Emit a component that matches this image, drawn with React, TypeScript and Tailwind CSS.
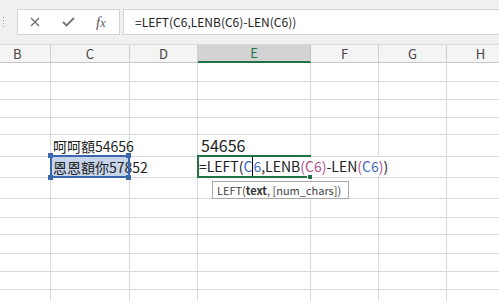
import React from "react";

const colW = ["w-[51px]", "w-[79px]", "w-[68px]", "w-[113px]", "w-[68px]", "w-[68px]", "w-[68px]"];
const headers = ["B", "C", "D", "E", "F", "G", "H"];
const rowH = [
  "h-[19px]",
  "h-[18px]",
  "h-[18px]",
  "h-[17px]",
  "h-[22px]",
  "h-[21px]",
  "h-[21px]",
  "h-[19px]",
  "h-[17px]",
  "h-[19px]",
  "h-[18px]",
  "h-[18px]",
  "h-[18px]",
];

const BLUE = "text-[#3e6bc2]";
const MAUVE = "text-[#b4508c]";

function CellContent({ r, c }: { r: number; c: number }) {
  if (r === 4 && c === 1) {
    return (
      <div className="absolute left-[2px] bottom-[1px] whitespace-nowrap text-[14px] leading-[18px] text-[#222]">
        呵呵額54656
      </div>
    );
  }
  if (r === 4 && c === 3) {
    return (
      <div className="absolute left-[3px] bottom-[2px] whitespace-nowrap text-[16px] leading-[18px] text-[#222]">
        54656
      </div>
    );
  }
  if (r === 5 && c === 1) {
    return (
      <>
        <div className="absolute left-[-1px] top-[-2px] w-[80px] h-[23px] bg-[#c6d5ea]" />
        <div className="absolute left-[2px] top-0 h-[20px] flex items-center whitespace-nowrap text-[14px] text-[#222] z-[1]">
          恩恩額你57852
        </div>
        <div className="absolute left-[-1px] top-[-2px] w-[80px] h-[23px] border-2 border-[#3a66ad] z-10" />
        <div className="absolute left-[-3px] top-[-4px] w-[5px] h-[5px] bg-[#3a66ad] z-10" />
        <div className="absolute left-[75px] top-[-4px] w-[5px] h-[5px] bg-[#3a66ad] z-10" />
        <div className="absolute left-[-3px] top-[18px] w-[5px] h-[5px] bg-[#3a66ad] z-10" />
        <div className="absolute left-[75px] top-[18px] w-[5px] h-[5px] bg-[#3a66ad] z-10" />
      </>
    );
  }
  if (r === 5 && c === 3) {
    return (
      <>
        <div className="absolute left-[-1px] top-[-2px] w-[114px] h-[23px] border-2 border-[#217346] z-10" />
        <div className="absolute left-[1px] top-0 h-[19px] pr-[3px] flex items-center whitespace-pre bg-white text-[14px] text-[#222] z-20">
          <span>=LEFT(</span>
          <span className={BLUE}>C</span>
          <span className="self-stretch w-px bg-black" />
          <span className={BLUE}>6</span>
          <span>,LENB</span>
          <span className={MAUVE}>(C6)</span>
          <span>-LEN</span>
          <span className={MAUVE}>(</span>
          <span className={BLUE}>C6</span>
          <span className={MAUVE}>)</span>
          <span>)</span>
        </div>
        <div className="absolute left-[109px] top-[17px] w-[6px] h-[6px] bg-[#217346] border border-white z-20" />
        <div className="absolute left-[14px] top-[24px] w-[137px] h-[18px] border border-[#a8a8a8] bg-white z-30 flex items-center pl-[4px] whitespace-pre text-[11px] text-[#444]">
          <span>LEFT(</span>
          <span className="font-bold text-[#333]">text</span>
          <span>, [num_chars])</span>
        </div>
      </>
    );
  }
  return null;
}

export default function App() {
  return (
    <div className="w-[499px] h-[301px] overflow-hidden bg-white font-['Noto_Sans_CJK_SC',sans-serif]">
      {/* Formula toolbar */}
      <div className="h-[45px] bg-[#f0f0f0] border-b border-[#d9d9d9] flex items-start pt-[9px]">
        <div className="w-[17px] h-[26px] flex flex-col items-center justify-center gap-[2px] pr-[11px]">
          <div className="w-px h-px bg-[#9a9a9a]" />
          <div className="w-px h-px bg-[#9a9a9a]" />
          <div className="w-px h-px bg-[#9a9a9a]" />
          <div className="w-px h-px bg-[#9a9a9a]" />
        </div>
        <div className="w-[103px] h-[26px] bg-white border border-[#d4d4d4] flex items-center shrink-0">
          <svg width="10" height="10" viewBox="0 0 10 10" className="ml-[12px]">
            <path d="M1 1 L9 9 M9 1 L1 9" stroke="#707070" strokeWidth="1.4" fill="none" />
          </svg>
          <svg width="13" height="10" viewBox="0 0 13 10" className="ml-[22px]">
            <path d="M1 5 L4.5 8.5 L12 1" stroke="#707070" strokeWidth="1.8" fill="none" />
          </svg>
          <span className="ml-[21px] font-['Liberation_Serif',serif] italic text-[15px] text-[#5a5a5a] leading-none">
            f<span className="text-[12px]">x</span>
          </span>
        </div>
        <div className="ml-[3px] flex-1 h-[26px] bg-white border border-[#d4d4d4] border-r-0 flex items-center pl-[11px] text-[12px] text-[#222] whitespace-pre">
          =LEFT(C6,LENB(C6)-LEN(C6))
        </div>
      </div>

      {/* Column headers */}
      <div className="flex h-[18px] bg-[#f4f4f4]">
        {headers.map((h, i) => (
          <div
            key={h}
            className={`${colW[i]} shrink-0 h-[18px] flex items-center text-[13px] ${
              i === 3
                ? "bg-[#d3d3d3] border-b-2 border-b-[#217346] text-[#217346] border-r border-r-[#c2c2c2]"
                : "border-b border-b-[#c6c6c6] text-[#444] border-r border-r-[#d0d0d0]"
            } ${i === 0 ? "justify-start pl-[13px]" : "justify-center"}`}
          >
            {h}
          </div>
        ))}
      </div>

      {/* Grid rows */}
      {rowH.map((rh, r) => (
        <div key={r} className={`flex ${rh}`}>
          {colW.map((cw, c) => (
            <div
              key={c}
              className={`${cw} ${rh} shrink-0 relative border-r border-b border-[#dadada]`}
            >
              <CellContent r={r} c={c} />
            </div>
          ))}
        </div>
      ))}
    </div>
  );
}
